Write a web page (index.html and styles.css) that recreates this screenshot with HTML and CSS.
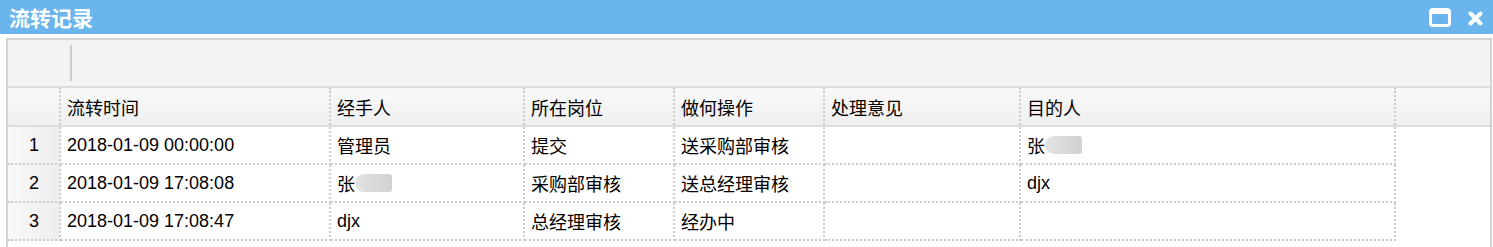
FILE: index.html
```html
<!DOCTYPE html>
<html lang="zh">
<head>
<meta charset="utf-8">
<title>流转记录</title>
<link rel="stylesheet" href="styles.css">
</head>
<body>
<div class="win">
  <div class="titlebar">
    <span class="title">流转记录</span>
    <div class="tools">
      <svg class="tool-max" width="22" height="19" viewBox="0 0 22 19"><rect x="1.5" y="1.5" width="19" height="16" rx="2.5" fill="none" stroke="#fff" stroke-width="3"/><rect x="2" y="2" width="18" height="4" fill="#fff"/></svg>
      <svg class="tool-close" width="15" height="15" viewBox="0 0 15 15"><path d="M2.5 2.5 L12.5 12.5 M12.5 2.5 L2.5 12.5" stroke="#fff" stroke-width="4" stroke-linecap="round"/></svg>
    </div>
  </div>
  <div class="panel">
    <div class="toolbar"><span class="sep"></span></div>
    <div class="ghead">
      <div class="cell rn"></div>
      <div class="cell c1">流转时间</div>
      <div class="cell c2">经手人</div>
      <div class="cell c3">所在岗位</div>
      <div class="cell c4">做何操作</div>
      <div class="cell c5">处理意见</div>
      <div class="cell c6">目的人</div>
    </div>
    <div class="gbody">
      <div class="row">
        <div class="cell rn">1</div>
        <div class="cell c1">2018-01-09 00:00:00</div>
        <div class="cell c2">管理员</div>
        <div class="cell c3">提交</div>
        <div class="cell c4">送采购部审核</div>
        <div class="cell c5"></div>
        <div class="cell c6">张<span class="blur"></span></div>
      </div>
      <div class="row">
        <div class="cell rn">2</div>
        <div class="cell c1">2018-01-09 17:08:08</div>
        <div class="cell c2">张<span class="blur"></span></div>
        <div class="cell c3">采购部审核</div>
        <div class="cell c4">送总经理审核</div>
        <div class="cell c5"></div>
        <div class="cell c6">djx</div>
      </div>
      <div class="row">
        <div class="cell rn">3</div>
        <div class="cell c1">2018-01-09 17:08:47</div>
        <div class="cell c2">djx</div>
        <div class="cell c3">总经理审核</div>
        <div class="cell c4">经办中</div>
        <div class="cell c5"></div>
        <div class="cell c6"></div>
      </div>
    </div>
  </div>
</div>
</body>
</html>
```

FILE: styles.css
```css
html, body {
  margin: 0;
  padding: 0;
  background: #fff;
}
body {
  font-family: "Liberation Sans", "Noto Sans CJK SC", sans-serif;
  font-size: 18px;
  color: #000;
  overflow: hidden;
}
.titlebar {
  height: 34px;
  background: #6ab5ee;
  display: flex;
  align-items: center;
  justify-content: space-between;
  padding: 0 10px 0 9px;
}
.title {
  color: #fff;
  font-weight: bold;
  font-size: 21px;
  font-family: "Noto Sans CJK SC", sans-serif;
  letter-spacing: 0;
}
.tools {
  display: flex;
  align-items: center;
  gap: 17px;
}
.tool-max { display: block; margin-top: 1px; }
.tool-close { display: block; margin-top: 2px; }
.panel {
  margin: 4px 1px 0 6px;
  border: 2px solid #d3d3d3;
  border-bottom: none;
  height: 300px;
}
.toolbar {
  height: 46px;
  background: #f3f3f3;
  border-bottom: 2px solid #dddddd;
  box-sizing: content-box;
  padding-left: 62px;
  display: flex;
  align-items: flex-start;
}
.sep {
  display: block;
  width: 2px;
  height: 36px;
  margin-top: 5px;
  background: #cccccc;
}
.ghead {
  display: flex;
  height: 37px;
  background: linear-gradient(to bottom, #f9f9f9 0, #efefef 100%);
  border-bottom: 2px solid #dddddd;
}
.ghead .cell {
  height: 37px;
  border-bottom: none;
}
.cell {
  box-sizing: border-box;
  height: 38px;
  padding: 0 6px;
  border-right: 2px dotted #cccccc;
  border-bottom: 2px dotted #cccccc;
  display: flex;
  align-items: center;
  white-space: nowrap;
  flex: none;
}
.rn {
  width: 53px;
  justify-content: center;
  padding: 0 0 0 1px;
}
.gbody .rn {
  background: linear-gradient(to right, #f8f8f8 0, #eeeeee 100%);
}
.c1 { width: 270px; }
.c2 { width: 194px; }
.c3 { width: 150px; }
.c4 { width: 150px; }
.c5 { width: 196px; }
.c6 { width: 375px; }
.gbody {
  display: flex;
  flex-direction: column;
}
.row {
  display: flex;
}
.blur {
  display: inline-block;
  width: 37px;
  height: 18px;
  margin-left: 0;
  border-radius: 9px 3px 3px 9px;
  background: linear-gradient(to right, #e4e4e4 0, #d9d9d9 50%, #d2d2d2 100%);
}
```
